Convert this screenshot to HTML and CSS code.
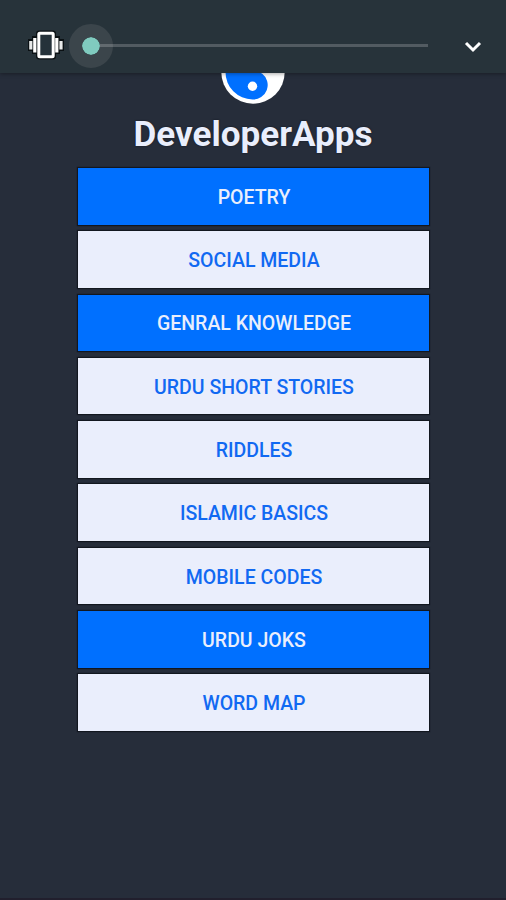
FILE: index.html
```
<!DOCTYPE html>
<html lang="en">
<head>
    <meta charset="UTF-8">
    <meta name="viewport" content="width=device-width, initial-scale=1.0">
    <title>DeveloperApps</title>
    <link rel="stylesheet" href="styles.css">
</head>
<body>
    <!-- volume panel, lies over the top of the app -->
    <div class="volume-panel">
        <svg class="vibrate-icon" width="36" height="30" viewBox="0 0 36 30">
            <rect x="0" y="9" width="36" height="12" fill="#0b1114"/>
            <rect x="4" y="6" width="28" height="18" fill="#0b1114"/>
            <rect x="8" y="0.5" width="20" height="29" rx="3" fill="#0b1114"/>
            <rect x="1.2" y="11" width="3.2" height="8.5" fill="#e8eaea"/>
            <rect x="5.2" y="8" width="3.2" height="14.5" fill="#fff"/>
            <rect x="27.2" y="8" width="3.2" height="14.5" fill="#fff"/>
            <rect x="31.4" y="11" width="3.2" height="8.5" fill="#e8eaea"/>
            <rect x="10.8" y="3.3" width="14.4" height="23.4" rx="1" fill="#25323a" stroke="#fff" stroke-width="3"/>
        </svg>
        <div class="slider">
            <div class="slider-thumb"></div>
            <div class="slider-track"></div>
        </div>
        <svg class="arrow-icon" width="18" height="14" viewBox="0 0 18 14">
            <path d="M2 3 L9 10 L16 3" fill="none" stroke="#fff" stroke-width="3"/>
        </svg>
    </div>

    <div class="container">
        <svg class="logo" width="64" height="64" viewBox="0 0 64 64">
            <circle cx="32" cy="32" r="31.7" fill="#fff"/>
            <path d="M32 5 A27 27 0 0 0 31.5 59.5 A14.5 14.5 0 0 0 41 33.5 Q37 31.5 32 31 A13 13 0 0 1 32 5 Z" fill="#0070ff"/>
            <circle cx="31.5" cy="46.3" r="4.7" fill="#fff"/>
            <circle cx="32" cy="18" r="4.7" fill="#0070ff"/>
        </svg>
        <h1>DeveloperApps</h1>
        <div class="menu">
            <button class="active">POETRY</button>
            <button>SOCIAL MEDIA</button>
            <button class="active">GENRAL KNOWLEDGE</button>
            <button>URDU SHORT STORIES</button>
            <button>RIDDLES</button>
            <button>ISLAMIC BASICS</button>
            <button>MOBILE CODES</button>
            <button class="active">URDU JOKS</button>
            <button>WORD MAP</button>
        </div>
    </div>
</body>
</html>
```

FILE: styles.css
```
body {
    font-family: Roboto, Arial, sans-serif;
    margin: 0;
    padding: 0;
    background-color: #262d3a;
}
.volume-panel {
    position: absolute;
    top: 0;
    left: 0;
    width: 100%;
    height: 73px;
    padding: 17px 24px 0 28px;
    box-sizing: border-box;
    display: flex;
    align-items: flex-start;
    background-color: #27333a;
    box-shadow: 0 1px 4px rgba(0, 0, 0, 0.35);
}
.vibrate-icon {
    margin-top: 13px;
}
.slider {
    display: flex;
    align-items: center;
    width: 359px;
    height: 57px;
    margin-left: 5px;
}
.slider-thumb {
    width: 18px;
    height: 18px;
    border: 13px solid #3b454b;
    border-radius: 50%;
    background-color: #80cbbf;
    background-clip: padding-box;
}
.slider-track {
    flex: 1;
    height: 3px;
    margin-left: -13px;
    background-color: rgba(255, 255, 255, 0.2);
}
.arrow-icon {
    margin-top: 23px;
    margin-left: 36px;
}
.container {
    min-height: 900px;
    padding-top: 40px;
    box-sizing: border-box;
    display: flex;
    flex-direction: column;
    align-items: center;
    border-bottom: 2px solid #211f2d;
}
h1 {
    margin: 9px 0 12px;
    font-size: 35.1px;
    line-height: 43px;
    font-weight: bold;
    color: #e9eefc;
    text-shadow: 0 0 2px #10151f;
}
.menu {
    display: flex;
    flex-direction: column;
    gap: 6.8px;
    width: 351px;
}
.menu button {
    height: 56.5px;
    padding: 2px 0 0 2px;
    border: none;
    font-family: inherit;
    font-size: 19.5px;
    font-weight: 500;
    color: #1169f2;
    background-color: #eaeefc;
    box-shadow: 0 0 1px 1px #12171f;
}
.menu button.active {
    color: #e9eefc;
    background-color: #0070ff;
}
```
